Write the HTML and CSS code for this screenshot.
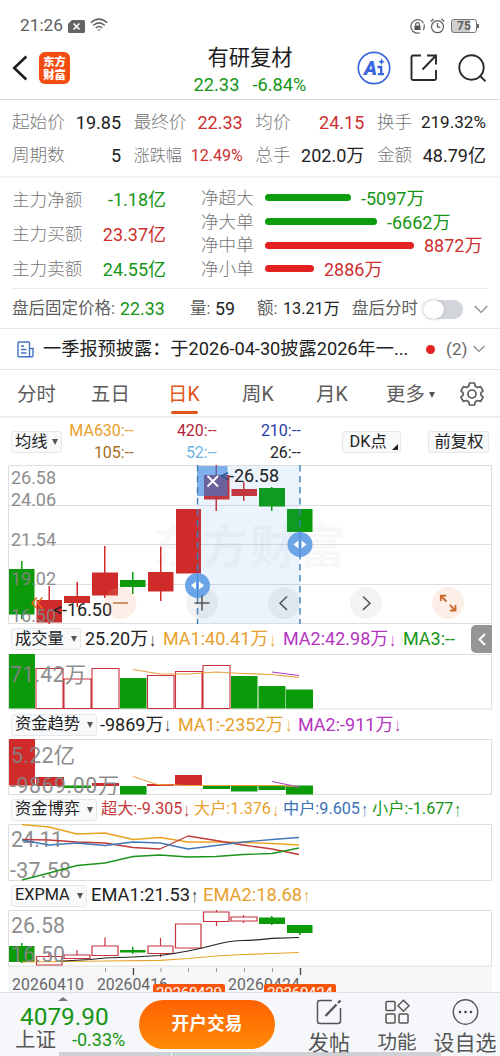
FILE: index.html
```html
<!DOCTYPE html>
<html lang="zh-CN">
<head>
<meta charset="utf-8">
<title>有研复材</title>
<link rel="stylesheet" href="styles.css">
</head>
<body>
<div class="screen">
  <div class="status">
    <span class="clock">21:26</span>
    <svg class="sim" width="17" height="13" viewBox="0 0 17 13"><path d="M4 0H15.500Q17 0 17 1.500V11.500Q17 13 15.500 13H1.500Q0 13 0 11.500V4Z" fill="#636363"/><path d="M5.500 3.500l6 6M11.500 3.500l-6 6" stroke="#fff" stroke-width="1.700"/></svg>
    <svg class="wifi" width="18" height="14" viewBox="0 0 18 14" fill="none" stroke="#606060" stroke-width="1.500"><path d="M.8 4.800Q9-2.600 17.200 4.800M3.200 7.500Q9 2.200 14.800 7.500M5.700 10Q9 7 12.300 10"/><path d="M7.500 11.400h3L9 13.200z" fill="#606060" stroke="none"/></svg>
    <span class="grow"></span>
    <svg width="15" height="15" viewBox="0 0 15 15" fill="none" stroke="#606060" stroke-width="1.200"><path d="M13.500 4.200A6.700 6.700 0 1 0 10 13.700M13.300 11A7 7 0 0 0 14 5.500"/><rect x="4.500" y="6.500" width="6" height="4.500" fill="#555" stroke="none"/><path d="M5.600 6.500V5.500a1.900 1.900 0 0 1 3.800 0v1"/></svg>
    <svg class="alarm" width="15" height="16" viewBox="0 0 15 16" fill="none" stroke="#606060" stroke-width="1.300"><circle cx="7.500" cy="8.700" r="6"/><path d="M7.500 5v4.200h3M.8 3.500L3.500 1M14.200 3.500L11.500 1"/></svg>
    <span class="battery">75</span><i class="nub"></i>
  </div>

  <header class="head">
    <svg class="back" width="16" height="26" viewBox="0 0 16 26" fill="none" stroke="#1d1d1d" stroke-width="2.600"><path d="M14.300 1.500L2.200 13l12.100 11.500"/></svg>
    <div class="brand"><b>东方</b><b>财富</b></div>
    <div class="title"><h1>有研复材</h1><p><span>22.33</span><span>-6.84%</span></p></div>
    <svg class="ai" width="34" height="34" viewBox="0 0 34 34"><circle cx="17" cy="17" r="15.700" fill="none" stroke="#3c68df" stroke-width="1.700"/><text x="7" y="24" font-size="20" textLength="13" lengthAdjust="spacingAndGlyphs" class="aitext">A</text><path d="M20.500 16h3.700v8M21 23.200h6" stroke="#3965df" stroke-width="2.300" fill="none"/><path d="M24.500 7.500l1 2.200 2.200 1-2.200 1-1 2.200-1-2.200-2.200-1 2.200-1z" fill="#3965df"/></svg>
    <svg class="share" width="28" height="28" viewBox="0 0 28 28" fill="none" stroke="#292929" stroke-width="1.900"><path d="M11 1.500H3Q1.500 1.500 1.500 3V24.500Q1.500 26 3 26H24.500Q26 26 26 24.500V16M17 1.500H26V10.500M26 1.500L12.500 15.500"/></svg>
    <svg class="search" width="29" height="29" viewBox="0 0 29 29" fill="none" stroke="#292929" stroke-width="1.900"><circle cx="13.500" cy="13.500" r="12.200"/><path d="M22.200 22l5.300 5.300"/></svg>
  </header>

  <section class="stats">
    <div><label>起始价</label><span>19.85</span></div>
    <div><label>最终价</label><span class="red">22.33</span></div>
    <div><label>均价</label><span class="red">24.15</span></div>
    <div><label>换手</label><span class="s17">219.32%</span></div>
    <div><label>周期数</label><span>5</span></div>
    <div><label class="s16">涨跌幅</label><span class="red s16">12.49%</span></div>
    <div><label>总手</label><span>202.0万</span></div>
    <div><label>金额</label><span>48.79亿</span></div>
  </section>

  <section class="flows">
    <div class="main-flow">
      <div><label>主力净额</label><span class="green">-1.18亿</span></div>
      <div><label>主力买额</label><span class="red">23.37亿</span></div>
      <div><label>主力卖额</label><span class="green">24.55亿</span></div>
    </div>
    <div class="net-flow">
      <div><label>净超大</label><i class="bar gbar" style="width:86px"></i><span class="green">-5097万</span></div>
      <div><label>净大单</label><i class="bar gbar" style="width:112px"></i><span class="green">-6662万</span></div>
      <div><label>净中单</label><i class="bar rbar" style="width:149px"></i><span class="red">8872万</span></div>
      <div><label>净小单</label><i class="bar rbar" style="width:49px"></i><span class="red">2886万</span></div>
    </div>
  </section>

  <section class="after">
    <span class="dk">盘后固定价格:</span><b class="green">22.33</b>
    <span class="dk">量:</span><b>59</b>
    <span class="dk">额:</span><b class="amt">13.21万</b>
    <span class="dk">盘后分时</span><i class="toggle"></i>
    <svg width="14" height="9" viewBox="0 0 14 9" fill="none" stroke="#888" stroke-width="1.200"><path d="M.7 1L7 7.500 13.300 1"/></svg>
  </section>

  <section class="news">
    <svg width="17" height="17" viewBox="0 0 17 17" fill="none" stroke="#4471c4" stroke-width="1.400"><path d="M12.500 15.800H2Q1 15.800 1 14.800V2Q1 1 2 1H11.500Q12.500 1 12.500 2V15.800H15Q16 15.800 16 14.800V7.500H12.500M4 5h3M4 8.500h5.500M4 12h5.500"/></svg>
    <span class="headline">一季报预披露：于2026-04-30披露2026年一...</span>
    <i class="dot"></i><span class="count">(2)</span>
    <svg width="12" height="8" viewBox="0 0 12 8" fill="none" stroke="#888" stroke-width="1.200"><path d="M.5 1L6 6.500 11.500 1"/></svg>
  </section>

  <nav class="tabs">
    <span>分时</span><span>五日</span><span class="on">日K</span><span>周K</span><span>月K</span><span>更多<i class="tri"></i></span>
    <svg width="24" height="26" viewBox="0 0 24 26" fill="none" stroke="#5c5c5c" stroke-width="1.700" stroke-linejoin="round"><path d="M9.500 2h5l.8 3.200 2.300 1.300 3.100-.9 2.400 4.200-2.300 2.200v2l2.300 2.200-2.400 4.200-3.100-.9-2.300 1.300-.8 3.200h-5l-.8-3.200-2.300-1.300-3.100.9L.9 16.200 3.200 14v-2L.9 9.800l2.400-4.200 3.100.9 2.300-1.300z"/><circle cx="12" cy="13" r="4"/></svg>
  </nav>

  <section class="ma">
    <span class="btn">均线<i class="tri"></i></span>
    <div class="vals">
      <span class="c-or">MA630:--</span><span class="c-cr">420:--</span><span class="c-nv">210:--</span>
      <span class="c-br">105:--</span><span class="c-sk">52:--</span><span>26:--</span>
    </div>
    <span class="btn dkp">DK点<i class="corner"></i></span>
    <span class="btn fq">前复权</span>
  </section>

  <svg class="chart" width="500" height="159" viewBox="0 465 500 159">
    <g class="grid"><path d="M8.500 465.500H491.500V623.500H8.500zM9 505.500H491M9 544.500H491M9 584.500H491"/></g>
    <text class="mark" x="153" y="563" textLength="192">东方财富</text>
    <g fill="#cf2b2b">
      <path d="M36.500 600h25.500v22.500H36.500zM64 596h26v7H64zM92 572.500h26v23H92zM148 572h25.500v19.500H148zM176 509h25v64.500H176zM204 475h25.500v24.500H204zM231.500 489h25.500v7h-25.500z"/>
      <path d="M48.500 586h1.500v38h-1.500zM76.500 582H78v25h-1.500zM104 546h1.500v52H104zM160 546.500h1.500V601H160zM215.500 465h1.500v46h-1.500zM243 482h1.500v19H243z"/>
    </g>
    <g fill="#0a9a0a"><path d="M9 569h25.500v45.500H9zM120 580h25.500v7H120zM259 488h26v18.500h-26zM287 509h25.500v23H287zM21 561h1.500v58H21zM132 572h1.500v22H132zM271 487h1.500v24H271z"/></g>
    <g class="axis"><text x="11" y="483.500" textLength="45">26.58</text><text x="11" y="505.500" textLength="45">24.06</text><text x="11" y="545.500" textLength="45">21.54</text><text x="11" y="585" textLength="45">19.02</text><text x="11" y="621.500" textLength="45">16.50</text></g>
    <rect x="197.500" y="466" width="102.500" height="157" fill="#459ae5" opacity=".11"/>
    <g class="note"><text x="53" y="616" textLength="59">&lt;-16.50</text><text x="220" y="482" textLength="59">&lt;-26.58</text></g>
    <rect x="197" y="466" width="30.500" height="30" fill="#2f7fe0" opacity=".58"/>
    <path d="M197.500 465V624M300 465V624" stroke="#3e7fb8" stroke-width="1.400" stroke-dasharray="6.500 4.500"/>
    <path d="M207.500 476l10.500 10.500M218 476l-10.500 10.500" stroke="#fff" stroke-width="1.800"/>
    <g opacity=".85" fill="#8a8a8a"><circle cx="120.500" cy="603" r="16" fill="#f7a57c" opacity=".2"/><circle cx="202" cy="603" r="16" opacity=".13"/><circle cx="284" cy="603" r="16" opacity=".13"/><circle cx="366" cy="603" r="16" opacity=".12"/><circle cx="448" cy="603" r="16" fill="#f7a57c" opacity=".2"/></g>
    <g fill="#6ba5e8"><circle cx="197.500" cy="585.500" r="12.500"/><circle cx="300" cy="544.500" r="12.500"/></g>
    <path d="M196 581.500v8l-5-4zM199 581.500v8l5-4zM298.500 540.500v8l-5-4zM301.500 540.500v8l5-4z" fill="#fff"/>
    <path d="M197.500 573v25M300 532v25" stroke="#4588d6"/>
    <g fill="none" stroke="#555" stroke-width="1.500"><path d="M194.500 603h15M202 595.500v15M287 596.500l-7 6.700 7 6.700M363 596.500l7 6.700-7 6.700"/><path d="M113 603h15" stroke="#bb763e"/><path d="M37 597.500l-5 5.500 5 5.500M42.500 597.500l-5 5.500 5 5.500" stroke="#ee681b"/><path d="M440.800 601v-5.300h5.400M441 596l5.500 5.500M455.500 605v5.500H450M455.300 610.300l-5.500-5.500" stroke="#c9682b" stroke-width="1.800"/></g>
  </svg>

  <section class="ind r1">
    <span class="btn">成交量<i class="tri"></i></span>
    <span>25.20万<i class="ar">↓</i></span><span class="c-or">MA1:40.41万<i class="ar">↓</i></span><span class="c-pu">MA2:42.98万<i class="ar">↓</i></span><span class="green">MA3:--</span>
    <div class="fold"><svg width="8" height="13" viewBox="0 0 8 13" fill="none" stroke="#fff" stroke-width="2"><path d="M7 1L1.500 6.500 7 12"/></svg></div>
  </section>
  <svg class="chart" width="500" height="56" viewBox="0 654 500 56">
    <path class="frame" d="M8.500 654.500H491.500V709H8.500z"/>
    <g fill="#fff" stroke="#c8323c" stroke-width="1.100"><path d="M36 668.500h27v40H36zM64 679h27v29.500H64zM92 668.500h27v40H92zM147.500 675.500H174v33h-26.500zM175.500 671.500H202v37h-26.500zM203 665.500h27v43h-27z"/></g>
    <path fill="#0a9a0a" d="M9 654h26v54.500H9zM120 678h26.500v30.500H120zM231 676h26.500v32.500H231zM258.500 686h27v22.500h-27zM286 689.500h27v19h-27z"/>
    <g fill="none" stroke-width="1.200"><path stroke="#e9a13b" d="M133 669.500L160 674H188L216 672 243 673.500 272 674.500 299 677.500"/><path stroke="#b040c0" d="M272 672L299 675.500"/></g>
    <g class="axis big"><text x="10" y="682" textLength="76">71.42万</text></g>
  </svg>

  <section class="ind r2">
    <span class="btn">资金趋势<i class="tri"></i></span>
    <span>-9869万<i class="ar">↓</i></span><span class="c-or">MA1:-2352万<i class="ar">↓</i></span><span class="c-pu">MA2:-911万<i class="ar">↓</i></span>
  </section>
  <svg class="chart" width="500" height="56" viewBox="0 739 500 56">
    <path class="frame" d="M8.500 739.500H491.500V794.500H8.500z"/>
    <path fill="#cf2b2b" d="M9 739h26v46.500H9zM36 777h28v9H36zM92 783h27v3H92zM147 784h27v2h-27zM175 775h27v10.500h-27z"/>
    <path fill="#0a9a0a" d="M64 785.500h27v2.500H64zM120 786h26.500v8.500H120zM203 785.500h27v3.500h-27zM231 785.500h26.500v6H231zM258.500 785.500h27v4.500h-27zM286 785.500h27v9h-27z"/>
    <g fill="none" stroke-width="1"><path stroke="#e9a13b" d="M133 776.500L157 784.500 188 785.500H280L299 787"/><path stroke="#b040c0" d="M272 781.500L299 787"/></g>
    <g class="axis big"><text x="11" y="763" textLength="64">5.22亿</text><text x="10" y="793" textLength="109">-9869.00万</text></g>
  </svg>

  <section class="ind r3">
    <span class="btn">资金博弈<i class="tri"></i></span>
    <span class="c-rd">超大:-9.305<i class="ar">↓</i></span><span class="c-or">大户:1.376<i class="ar">↓</i></span><span class="c-bl">中户:9.605<i class="ar">↑</i></span><span class="green">小户:-1.677<i class="ar">↑</i></span>
  </section>
  <svg class="chart" width="500" height="57" viewBox="0 824 500 57">
    <path class="frame" d="M8.500 824.500H491.500V880.500H8.500z"/>
    <g class="axis big"><text x="11" y="847" textLength="52">24.11</text><text x="10" y="878" textLength="61">-37.58</text></g>
    <g fill="none" stroke-width="1.300" stroke-linejoin="round">
      <path stroke="#e9a320" d="M22 824.500L49 827 77 834 105 833 133 839.500 160 837.500 188 842H216L243 842.500 272 843.500 299 845"/>
      <path stroke="#c03a3a" d="M22 839.500L49 840 77 842 105 843 133 847.500 160 849 188 836 216 840.500 243 845 272 849 299 854.500"/>
      <path stroke="#4377b5" d="M22 840L49 845 77 843 105 845.500 133 842 160 843 188 849 216 845.500 243 842 272 839.500 299 837.500"/>
      <path stroke="#1c931c" d="M22 880L49 873 77 865.500 105 863 133 856.500 160 855 188 857 216 856.500 243 854.500 272 853.500 299 848"/>
    </g>
  </svg>

  <section class="ind r4">
    <span class="btn">EXPMA<i class="tri"></i></span>
    <span>EMA1:21.53<i class="ar">↑</i></span><span class="c-or">EMA2:18.68<i class="ar">↑</i></span>
  </section>
  <svg class="chart" width="500" height="82" viewBox="0 910 500 82">
    <rect x="8" y="966" width="484" height="26" fill="#f6f7f9"/>
    <path class="frame" d="M8.500 910.500H491.500V966H8.500z"/>
    <g fill="#fff" stroke="#c8323c" stroke-width="1.200"><path d="M36.500 956.500H62v8.500H36.500zM64 955h26v3.500H64zM92 946h26v9.500H92zM148 946h25v7.500h-25zM175.500 924H201v24h-25.500zM203.500 912H229v9.500h-25.500zM231 917h26v4h-26z"/><path d="M49 953v3.500M77 950v5M105 937.500v8.500M160.500 938v8M160.500 953.500v3.500M216.500 910v2M216.500 921.500v4.500M243.500 915v2M243.500 921v2"/></g>
    <path fill="#0a9a0a" d="M9 946h25.500v16H9zM21 943h1.500v20H21zM120 950h25.500v2.500H120zM132 947h1.500v7H132zM259 917.500h26v6.500h-26zM271 916h1.500v9H271zM287 925h25.500v8H287zM299 933h1.500v2H299z"/>
    <g fill="none" stroke-width="1.200"><path stroke="#e9a32b" d="M22 962L63 961.500 105 961 160 960.300 188 958.500 216 956 243 954.500 272 953.500 299 952.500"/><path stroke="#222" d="M63 961L90 959.500 105 958 133 957 160 955.500 Q175 953.500 188 951T216 944.500 243 940.500 272 938.300L299 937.500"/></g>
    <g class="axis big"><text x="11" y="933" textLength="54">26.58</text><text x="11" y="962" textLength="54">16.50</text></g>
    <path d="M105.500 968v4M161 968v4M188.500 968v4M216.500 968v4M244.500 968v4M272.500 968v4" stroke="#999"/><path d="M133.500 968v7M300.500 968v7" stroke="#444" stroke-width="1.300"/>
    <g class="date"><text x="12" y="990" textLength="72">20260410</text><text x="97" y="990" textLength="71">20260416</text><text x="228" y="990" textLength="72">20260424</text></g>
    <path d="M153 992v-6q0-2 2-2h68q2 0 2 2v6zM264 992v-6q0-2 2-2h68q2 0 2 2v6z" fill="#f8540a"/>
    <g class="tag"><text x="156" y="997.500" textLength="66">20260420</text><text x="267" y="997.500" textLength="66">20260424</text></g>
  </svg>

  <footer class="foot">
    <div class="index"><i class="up"></i><strong>4079.90</strong><p><span>上证</span><em>-0.33%</em></p></div>
    <div class="cta">开户交易</div>
    <div class="act a1"><svg width="26" height="26" viewBox="0 0 26 26" fill="none" stroke="#555" stroke-width="1.500"><path d="M16 1.500H4Q1.500 1.500 1.500 4V22Q1.500 24.500 4 24.500H22Q24.500 24.500 24.500 22V9"/><path d="M9.500 17L20.500 5.500M22 4l2.500-2.500" stroke-width="2.400"/></svg><span>发帖</span></div>
    <div class="act a2"><svg width="26" height="26" viewBox="0 0 26 26" fill="none" stroke="#555" stroke-width="1.500"><rect x="2" y="2.500" width="9" height="9" rx="1"/><rect x="2" y="15" width="9" height="9" rx="1"/><rect x="15" y="15" width="9" height="9" rx="1"/><path d="M19.500 1.200l5.500 5.500-5.500 5.500-5.500-5.500z"/></svg><span>功能</span></div>
    <div class="act a3"><svg width="27" height="26" viewBox="0 0 27 26"><circle cx="13.500" cy="13" r="12.200" fill="none" stroke="#555" stroke-width="1.400"/><g fill="#444"><circle cx="8" cy="13" r="1.300"/><circle cx="13.500" cy="13" r="1.300"/><circle cx="19" cy="13" r="1.300"/></g></svg><span>设自选</span></div>
    <div class="edge"><i></i><i></i></div>
  </footer>
</div>
</body>
</html>
```
FILE: styles.css
```css
* { box-sizing: border-box; }
body { margin: 0; background: #fff; }
.screen { width: 500px; height: 1056px; overflow: hidden; display: flex; flex-direction: column; background: #fff; color: #222; font-family: Roboto, "Noto Sans CJK SC", sans-serif; font-size: 18px; line-height: 1; white-space: nowrap; }
.screen > * { flex: none; }
i, em { font-style: normal; }
svg { display: block; flex: none; }
h1, p { margin: 0; font-weight: 400; }
label { color: #777; font-size: 17.6px; font-weight: 300; }
.red { color: #cc3030; }
.green { color: #159515; }
.c-or { color: #e8a02c; }
.c-cr { color: #b51f3c; }
.c-nv { color: #2a3ca8; }
.c-br { color: #a5701e; }
.c-sk { color: #6db4e4; }
.c-pu { color: #b435c0; }
.c-rd { color: #c43838; }
.c-bl { color: #3b70b5; }

.status { height: 50px; padding: 2px 21px 0 20px; display: flex; align-items: center; color: #606060; }
.clock { font-size: 17.3px; width: 48px; }
.wifi { margin-left: 5px; margin-top: -3px; }
.grow { flex: 1; }
.alarm { margin: 0 6px 0 5px; }
.battery { width: 26px; height: 14px; border: 1px solid #777; border-radius: 3px; background: linear-gradient(90deg, #cfcfcf 75%, #fff 75%); font-size: 12px; line-height: 12.5px; font-weight: 700; text-align: center; }
.nub { width: 2px; height: 4px; background: #666; }

.head { height: 50px; border-bottom: 1px solid #d9d9d9; display: flex; padding: 2px 13px 0 12px; }
.back { margin-top: 3px; }
.brand { width: 31px; height: 32px; margin-left: 11px; border-radius: 6px; background: #f44d12; color: #fff; display: flex; flex-direction: column; align-items: center; justify-content: center; font: 700 11.3px/13px "Noto Sans CJK SC", sans-serif; }
.title { width: 140px; margin-left: 110px; text-align: center; margin-top: -7px; }
.title h1 { font-size: 21.3px; line-height: 24px; margin-top: 1px; color: #1c1c1c; }
.title p { display: flex; justify-content: center; gap: 13px; color: #159515; font-size: 18.3px; line-height: 20px; margin-top: 5px; }
.ai { margin-left: 37px; margin-top: -1px; }
.aitext { font-weight: 900; font-style: italic; fill: #3965df; }
.share { margin-left: 19px; margin-top: 2px; }
.search { margin-left: 20px; margin-top: 2px; }

.stats { height: 78px; padding: 6px 14px 0 12px; border-bottom: 2px solid #f2f2f2; display: grid; grid-template-columns: repeat(4, 109px); justify-content: space-between; grid-auto-rows: 33px; }
.stats div { display: flex; justify-content: space-between; align-items: center; }
.s16 { font-size: 16px; }
.s17 { font-size: 17.1px; }

.flows { height: 111px; margin: 0 12px; border-bottom: 1px solid #ebebeb; display: flex; }
.main-flow { width: 154px; padding-top: 5px; }
.main-flow div { height: 34.700px; display: flex; align-items: center; justify-content: space-between; }
.net-flow { margin-left: 35px; padding-top: 9px; }
.net-flow div { height: 23.700px; display: flex; align-items: center; }
.net-flow label { width: 64px; }
.bar { height: 7px; border-radius: 4px; margin-right: 10px; margin-top: -2px; }
.gbar { background: #0b9d0b; }
.rbar { background: #e42020; }

.after { height: 40px; padding: 1px 13px 0 12px; border-bottom: 1px solid #e8e8e8; display: grid; grid-template-columns: 108px 70px 25px 42px 26px 69px 71px 51px 14px; align-items: center; }
.after b { font-weight: 400; font-size: 17.8px; }
.after .amt { font-size: 16.2px; }
.dk { color: #606060; font-size: 16.5px; }
.toggle { display: block; width: 40px; height: 19px; border-radius: 10px; background: #d2d5d9; }
.toggle::before { content: ""; display: block; width: 21px; height: 19px; border-radius: 50%; background: #fff; box-shadow: 0 0 3px #aaa; }

.news { height: 41px; padding: 0 15px 0 17px; border-bottom: 1px solid #e2e2e2; display: flex; align-items: center; }
.headline { width: 384px; padding-left: 9px; font-size: 18.2px; }
.dot { width: 9px; height: 9px; border-radius: 50%; background: #e32222; margin: 0 11px 0 9px; }
.count { color: #666; font-size: 17px; width: 27px; }

.tabs { height: 48px; padding: 4px 0 0 17px; border-bottom: 2px solid #ececec; display: grid; grid-template-columns: 74px 79px 72px 74px 70px 74px 24px; color: #5c5c5c; font-size: 19.4px; }
.tabs > span { height: 42px; line-height: 42px; display: flex; align-items: center; }
.tabs > svg { margin-top: 7px; }
.tabs .on { color: #e0561a; position: relative; margin-left: -2px; }
.tabs .on::after { content: ""; position: absolute; left: 3px; bottom: 2px; width: 27px; height: 3px; border-radius: 2px; background: #e0561a; }
.tri { display: inline-block; width: 0; height: 0; border: 3.500px solid transparent; border-top: 6px solid #555; border-bottom: 0; margin-left: 4px; flex: none; }

.ma { height: 47px; display: flex; align-items: center; padding: 0 11px; font-size: 16px; }
.btn { height: 22px; background: #f8f9fa; border: 1px solid #e6e8ea; border-radius: 3px; padding: 0 3px; font-size: 16.3px; display: flex; align-items: center; }
.ma .btn { margin-top: 1px; }
.vals { width: 239px; display: grid; grid-template-columns: 72px 83px 84px; grid-auto-rows: 22px; align-items: center; text-align: right; }
.dkp { margin-left: 41px; width: 59px; padding-left: 7px; }
.corner { width: 0; height: 0; border-left: 6px solid transparent; border-bottom: 6px solid #222; margin: 9px 0 0 5px; }
.fq { margin-left: 27px; width: 62px; padding-left: 6px; }

.chart { overflow: hidden; }
.grid path, .frame { fill: none; stroke: #dedede; }
.axis { fill: #858585; font-size: 18px; opacity: .92; }
.big { font-size: 21.300px; }
.note { font-size: 18px; fill: #222; }
.mark { font-family: "Noto Sans CJK SC", sans-serif; font-size: 46px; font-weight: 700; fill: #777; opacity: .045; }
.date { font-size: 15.800px; fill: #666; }
.tag { font-size: 15px; fill: #fff; }

.ind { display: grid; align-items: center; padding-left: 11px; position: relative; }
.ind > span:not(.btn) { display: flex; align-items: center; }
.ind .btn { justify-self: start; }
.ind .tri { margin-left: 7px; }
.ar { font-family: "Liberation Sans", sans-serif; font-size: 15px; width: 8px; margin-left: 1px; transform: scale(.85, 1.25); }
.r1 { height: 30px; grid-template-columns: 74px 78px 120px 120px 60px; }
.r2 { height: 29px; grid-template-columns: 89px 78px 120px 120px; }
.r3 { height: 29px; grid-template-columns: 90px 93px 89px 89px 90px; font-size: 16.200px; }
.r4 { height: 29px; grid-template-columns: 80px 112px 112px; font-size: 18.300px; }
.fold { position: absolute; right: 8px; top: 1px; width: 21px; height: 28px; border-radius: 5px 0 0 5px; background: #959595; display: flex; align-items: center; justify-content: center; }

.foot { height: 64px; background: #f6f7fa; border-top: 1px solid #dfe1e4; display: flex; position: relative; overflow: hidden; }
.index { width: 139px; padding-left: 15px; }
.up { display: block; width: 0; height: 0; margin: 4px 0 0 43px; border: 5px solid transparent; border-bottom: 4px solid #777; border-top: 0; }
.index strong { display: block; font-weight: 400; font-size: 24.400px; line-height: 24px; color: #159515; margin: 4px 0 0 5px; }
.index p { display: flex; align-items: center; color: #555; font-size: 20.500px; line-height: 22px; }
.index em { font-size: 18px; color: #159515; margin-left: 16px; }
.cta { width: 136px; height: 49px; margin-top: 7px; border-radius: 25px; background: linear-gradient(#ff6202, #ff8a05); color: #fff; font-weight: 700; font-size: 17.700px; line-height: 49px; text-align: center; }
.act { display: flex; flex-direction: column; align-items: center; color: #555; padding-top: 6px; z-index: 1; }
.act span { font-size: 21px; line-height: 24px; margin-top: 6px; }
.a1 { margin-left: 33px; width: 42px; }
.a2 { margin-left: 26px; width: 42px; }
.a2 span { font-size: 19.500px; }
.a3 { margin-left: 15px; width: 64px; }
.edge { position: absolute; left: 59px; bottom: 0; width: 382px; height: 4px; display: flex; gap: 1px; }
.edge i { flex: 1; background: #cfd1d4; }
.edge i:first-child { flex: none; width: 112px; }
```
